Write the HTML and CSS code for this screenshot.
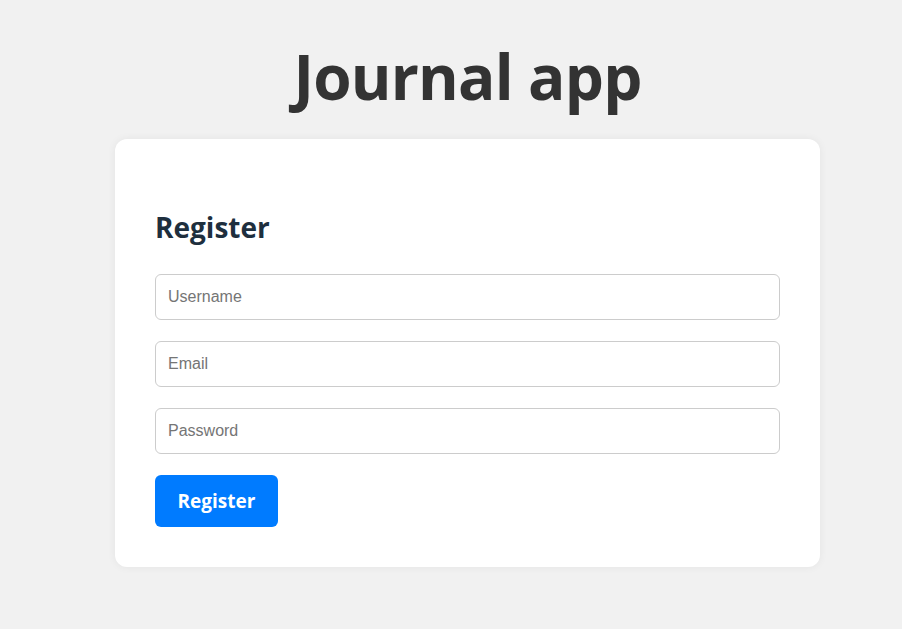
FILE: index.html
```html
<!DOCTYPE html>
<html lang="en">
<head>
<meta charset="utf-8">
<title>Journal app</title>
<link rel="stylesheet" href="styles.css">
</head>
<body>
<main class="page">
  <h1 class="title">Journal app</h1>
  <section class="card">
    <h2 class="card-title">Register</h2>
    <form class="form">
      <input class="field" type="text" placeholder="Username">
      <input class="field" type="email" placeholder="Email">
      <input class="field" type="password" placeholder="Password">
      <button class="btn" type="button">Register</button>
    </form>
  </section>
</main>
</body>
</html>
```

FILE: styles.css
```css
* { box-sizing: border-box; }
html, body { margin: 0; padding: 0; }
body {
  background: #f1f1f1;
  font-family: "Open Sans", "Noto Sans", sans-serif;
  color: #333;
  width: 902px;
  height: 629px;
  overflow: hidden;
}
.page {
  display: flex;
  flex-direction: column;
  align-items: center;
  padding-left: 33px;
}
.title {
  margin: 34px 0 21px;
  font-size: 62px;
  line-height: 84px;
  font-weight: 700;
  color: #333;
  letter-spacing: -0.8px;
}
.card {
  width: 705px;
  background: #fff;
  border-radius: 12px;
  box-shadow: 0 0 8px rgba(0,0,0,0.06);
  padding: 70px 40px 40px;
}
.card-title {
  margin: 0 0 29px;
  font-size: 28px;
  line-height: 36px;
  font-weight: 700;
  color: #1e2f3e;
}
.form {
  display: flex;
  flex-direction: column;
  align-items: flex-start;
  gap: 21px;
}
.field {
  width: 100%;
  height: 46px;
  border: 1px solid #cccccc;
  border-radius: 6px;
  padding: 0 12px;
  font-family: "Liberation Sans", Arial, sans-serif;
  font-size: 16px;
  color: #333;
  background: #fff;
}
.field::placeholder { color: #757575; }
.btn {
  width: 123px;
  height: 52px;
  border: none;
  border-radius: 6px;
  background: #007bff;
  color: #fff;
  font-family: "Open Sans", "Noto Sans", sans-serif;
  font-size: 19px;
  font-weight: 700;
  padding: 0;
}
```
